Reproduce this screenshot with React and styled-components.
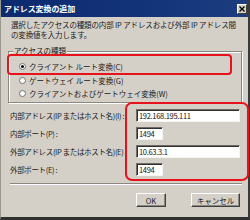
import React from 'react';
import styled, { createGlobalStyle } from 'styled-components';

const Global = createGlobalStyle`
  html, body { margin: 0; padding: 0; background: #d4d0c8; }
  body { width: 250px; height: 220px; overflow: hidden; font-family: "Noto Sans CJK JP", "Noto Sans", sans-serif; }
`;

const Window = styled.div`
  position: relative;
  width: 250px;
  height: 220px;
  box-sizing: border-box;
  background: #d4d0c8;
  border-left: 1px solid #9a978f;
  border-right: 2px solid #3a3a3a;
  border-bottom: 3px solid #303030;
  display: flex;
  flex-direction: column;
  color: #1a1a1a;
`;

const TitleBar = styled.div`
  height: 17px;
  flex: none;
  background: linear-gradient(90deg, #0c2a6e 0%, #14347a 60%, #1d3d80 100%);
  display: flex;
  align-items: center;
  justify-content: space-between;
  padding: 0 1px 0 3px;
`;

const Title = styled.span`
  color: #fff;
  font-size: 8px;
  font-weight: 700;
  letter-spacing: -0.1px;
`;

const CloseBtn = styled.div`
  width: 10px;
  height: 10px;
  box-sizing: border-box;
  background: #d4d0c8;
  border: 1px solid;
  border-color: #fff #404040 #404040 #fff;
  display: flex;
  align-items: center;
  justify-content: center;
`;

const Body = styled.div`
  flex: 1;
  display: flex;
  flex-direction: column;
  padding: 3px 6px 0 7px;
`;

const Desc = styled.p`
  margin: 0;
  padding-left: 3px;
  font-size: 7.5px;
  line-height: 9.5px;
  letter-spacing: -0.15px;
`;

const Group = styled.div`
  position: relative;
  margin-top: 12px;
  height: 52px;
  box-sizing: border-box;
  border: 1px solid #8a877f;
  box-shadow: inset 1px 1px 0 #fff, 1px 1px 0 #fff;
  padding: 8px 0 0 10px;
  display: flex;
  flex-direction: column;
`;

const GroupLabel = styled.span`
  position: absolute;
  top: -6px;
  left: 4px;
  padding: 0 1px;
  background: #d4d0c8;
  font-size: 7.5px;
  line-height: 10px;
`;

const RadioRow = styled.div`
  display: flex;
  align-items: center;
  height: 13.5px;
  font-size: 7.5px;
  gap: 3px;
`;

const RadioDot = styled.span`
  width: 7px;
  height: 7px;
  box-sizing: border-box;
  border-radius: 50%;
  background: #fff;
  border: 1px solid #707070;
  display: flex;
  align-items: center;
  justify-content: center;
  &::after {
    content: "";
    width: 3px;
    height: 3px;
    border-radius: 50%;
    background: ${p => (p.$on ? '#000' : 'transparent')};
  }
`;

const Fields = styled.div`
  margin-top: 6px;
  display: grid;
  grid-template-columns: 128px auto;
  row-gap: 5px;
  align-items: center;
`;

const Label = styled.span`
  padding-left: 2px;
  font-size: 7.5px;
  line-height: 13px;
  letter-spacing: -0.35px;
  white-space: nowrap;
  overflow: hidden;
`;

const Input = styled.div`
  width: ${p => p.$w}px;
  height: 13px;
  box-sizing: border-box;
  background: #fff;
  border: 1px solid;
  border-color: #6e6b64 #f4f3ef #f4f3ef #6e6b64;
  box-shadow: inset 1px 1px 0 #303030;
  font-size: 7.5px;
  line-height: 11px;
  padding-left: 2px;
  letter-spacing: -0.3px;
  color: #111;
`;

const Separator = styled.div`
  margin: 7px 0 0 2px;
  height: 1px;
  background: #8a877f;
  border-bottom: 1px solid #fff;
`;

const Buttons = styled.div`
  margin-top: 8px;
  padding-right: 2px;
  display: flex;
  justify-content: flex-end;
  gap: 25px;
`;

const Button = styled.div`
  width: ${p => p.$w}px;
  height: 14px;
  box-sizing: border-box;
  border: 1px solid;
  border-color: #fff #404040 #404040 #fff;
  box-shadow: inset -1px -1px 0 #8a877f;
  display: flex;
  align-items: center;
  justify-content: center;
  font-size: 7.5px;
`;

const Highlight = styled.div`
  position: absolute;
  left: ${p => p.$x}px;
  top: ${p => p.$y}px;
  width: ${p => p.$w}px;
  height: ${p => p.$h}px;
  box-sizing: border-box;
  border: 2px solid #e8121c;
  border-radius: ${p => p.$r}px;
  pointer-events: none;
`;

const fields = [
  { label: '内部アドレス(IP またはホスト名)(I) :', value: '192.168.195.111', w: 104 },
  { label: '内部ポート(P) :', value: '1494', w: 27 },
  { label: '外部アドレス(IP またはホスト名)(E) :', value: '10.63.3.1', w: 104 },
  { label: '外部ポート(E) :', value: '1494', w: 27 },
];

const radios = [
  { text: 'クライアント ルート変換(C)', on: true },
  { text: 'ゲートウェイ ルート変換(G)', on: false },
  { text: 'クライアントおよびゲートウェイ変換(W)', on: false },
];

export default function App() {
  return (
    <>
      <Global />
      <Window>
        <TitleBar>
          <Title>アドレス変換の追加</Title>
          <CloseBtn>
            <svg width="6" height="6" viewBox="0 0 6 6">
              <path d="M0.5 0.5 L5.5 5.5 M5.5 0.5 L0.5 5.5" stroke="#000" strokeWidth="1.3" />
            </svg>
          </CloseBtn>
        </TitleBar>
        <Body>
          <Desc>
            選択したアクセスの種類の内部 IP アドレスおよび外部 IP アドレス間
            <br />
            の変換値を入力します。
          </Desc>
          <Group>
            <GroupLabel>アクセスの種類</GroupLabel>
            {radios.map(r => (
              <RadioRow key={r.text}>
                <RadioDot $on={r.on} />
                <span>{r.text}</span>
              </RadioRow>
            ))}
          </Group>
          <Fields>
            {fields.map(f => (
              <React.Fragment key={f.label}>
                <Label>{f.label}</Label>
                <Input $w={f.w}>{f.value}</Input>
              </React.Fragment>
            ))}
          </Fields>
          <Separator />
          <Buttons>
            <Button $w={30}>OK</Button>
            <Button $w={49}>キャンセル</Button>
          </Buttons>
        </Body>
        <Highlight $x={6} $y={54} $w={225} $h={21} $r={4} />
        <Highlight $x={124} $y={102} $w={124} $h={79} $r={7} />
      </Window>
    </>
  );
}
